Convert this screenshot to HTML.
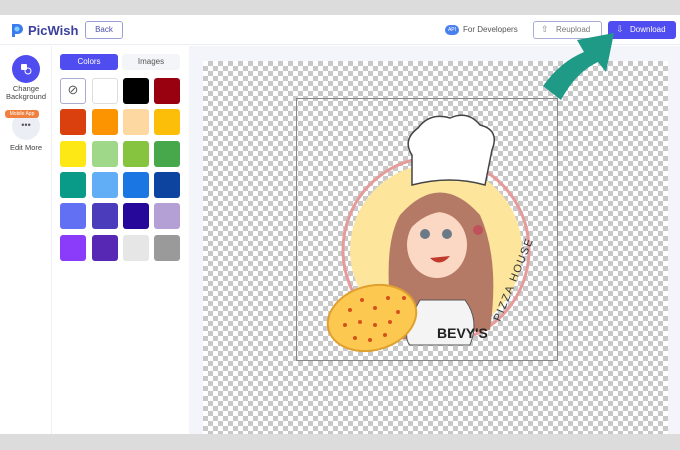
<!DOCTYPE html>
<html><head><meta charset="utf-8"><style>
*{margin:0;padding:0;box-sizing:border-box}
body{width:680px;height:450px;overflow:hidden;background:#fff;font-family:"Liberation Sans",sans-serif;position:relative}
.abs{position:absolute}
.top{left:0;top:0;width:680px;height:15px;background:#dcdcdc}
.bot{left:0;top:434px;width:680px;height:16px;background:#dcdcdc}
.hdr{left:0;top:15px;width:680px;height:30px;background:#fff;border-bottom:1px solid #eceef3}
.sw{position:absolute;width:26px;height:26px;border-radius:3px}
.checker{left:203px;top:61px;width:465px;height:373px;background-color:#fff;
background-image:linear-gradient(45deg,#c8c8c8 25%,transparent 25%,transparent 75%,#c8c8c8 75%),linear-gradient(45deg,#c8c8c8 25%,transparent 25%,transparent 75%,#c8c8c8 75%);
background-size:10px 10px;background-position:0 0,5px 5px}
</style></head><body>
<div class="abs top"></div>
<div class="abs hdr"></div>
<svg class="abs" style="left:9px;top:22px" width="16" height="16" viewBox="0 0 16 16"><path d="M3 2h6a5 5 0 0 1 0 10H6v3H3z" fill="#3a7bf0"/><circle cx="8" cy="7" r="2.5" fill="#7fd0ff"/></svg>
<div class="abs" style="left:28px;top:23px;font-size:13px;font-weight:bold;color:#3b3f9e">PicWish</div>
<div class="abs" style="left:85px;top:21px;width:38px;height:18px;border:1.5px solid #9aa0d8;border-radius:3px;font-size:8px;color:#4a50a8;text-align:center;line-height:15px">Back</div>
<div class="abs" style="left:445px;top:25px;width:14px;height:10px;background:#4a7ff0;border-radius:5px;font-size:5px;color:#fff;text-align:center;line-height:10px">API</div>
<div class="abs" style="left:463px;top:25px;font-size:8px;color:#555">For Developers</div>
<div class="abs" style="left:533px;top:21px;width:69px;height:18px;border:1.5px solid #a9acd8;border-radius:3px;font-size:8px;color:#777;line-height:15px;padding-left:22px">Reupload</div>
<div class="abs" style="left:541px;top:24px;font-size:9px;color:#888">⇧</div>
<div class="abs" style="left:608px;top:21px;width:68px;height:18px;background:#4f4cf0;border-radius:3px;font-size:8px;color:#fff;line-height:18px;padding-left:22px">Download</div>
<div class="abs" style="left:616px;top:24px;font-size:9px;color:#dde">⇩</div>
<div class="abs" style="left:0;top:46px;width:52px;height:388px;background:#fff;border-right:1px solid #eef0f4"></div>
<div class="abs" style="left:12px;top:55px;width:28px;height:28px;border-radius:50%;background:#4f4cf0"></div>
<svg class="abs" style="left:18px;top:61px" width="16" height="16"><rect x="3" y="3" width="6" height="6" rx="1" fill="#fff"/><circle cx="10" cy="10" r="3" fill="none" stroke="#fff"/></svg>
<div class="abs" style="left:0;top:85px;width:52px;text-align:center;font-size:7.5px;color:#444;line-height:8px">Change<br>Background</div>
<div class="abs" style="left:12px;top:112px;width:28px;height:28px;border-radius:50%;background:#eceef5;text-align:center;font-size:9px;color:#555;line-height:26px">•••</div>
<div class="abs" style="left:5px;top:110px;width:34px;height:8px;background:#f08040;border-radius:3px;font-size:5px;color:#fff;text-align:center;line-height:8px">Mobile App</div>
<div class="abs" style="left:0;top:143px;width:52px;text-align:center;font-size:7.5px;color:#444">Edit More</div>
<div class="abs" style="left:52px;top:46px;width:137px;height:388px;background:#fff"></div>
<div class="abs" style="left:60px;top:54px;width:58px;height:16px;background:#4f4cf0;border-radius:3px;font-size:8px;color:#fff;text-align:center;line-height:16px">Colors</div>
<div class="abs" style="left:122px;top:54px;width:58px;height:16px;background:#f4f5f8;border-radius:3px;font-size:8px;color:#555;text-align:center;line-height:16px">Images</div>
<div class="sw" style="left:60px;top:78px;border:1.5px solid #a9acd0;background:#fff;text-align:center;line-height:22px;font-size:13px;color:#555">⊘</div>
<div class="sw" style="left:92px;top:78px;border:1px solid #ddd;background:#fff"></div>
<div class="sw" style="left:123px;top:78px;background:#000"></div>
<div class="sw" style="left:154px;top:78px;background:#990010"></div>
<div class="sw" style="left:60px;top:109px;background:#d9400e"></div>
<div class="sw" style="left:92px;top:109px;background:#fb9400"></div>
<div class="sw" style="left:123px;top:109px;background:#fdd8a0"></div>
<div class="sw" style="left:154px;top:109px;background:#fdbe0a"></div>
<div class="sw" style="left:60px;top:141px;background:#fde816"></div>
<div class="sw" style="left:92px;top:141px;background:#a0d88a"></div>
<div class="sw" style="left:123px;top:141px;background:#86c440"></div>
<div class="sw" style="left:154px;top:141px;background:#46a84a"></div>
<div class="sw" style="left:60px;top:172px;background:#0a9a88"></div>
<div class="sw" style="left:92px;top:172px;background:#62aef6"></div>
<div class="sw" style="left:123px;top:172px;background:#1a76e2"></div>
<div class="sw" style="left:154px;top:172px;background:#0c44a0"></div>
<div class="sw" style="left:60px;top:203px;background:#6270f4"></div>
<div class="sw" style="left:92px;top:203px;background:#4a3cba"></div>
<div class="sw" style="left:123px;top:203px;background:#26089a"></div>
<div class="sw" style="left:154px;top:203px;background:#b4a0d4"></div>
<div class="sw" style="left:60px;top:235px;background:#8a3cfa"></div>
<div class="sw" style="left:92px;top:235px;background:#5628b4"></div>
<div class="sw" style="left:123px;top:235px;background:#e6e6e6"></div>
<div class="sw" style="left:154px;top:235px;background:#9a9a9a"></div>
<div class="abs" style="left:189px;top:46px;width:491px;height:388px;background:#f3f5fa"></div>
<div class="abs checker"></div>
<div class="abs" style="left:296px;top:98px;width:262px;height:263px;border:1px solid #888"></div>
<svg class="abs" style="left:0;top:0" width="680" height="450">
<circle cx="436" cy="250" r="93" fill="none" stroke="#e79a9a" stroke-width="3"/>
<circle cx="436" cy="250" r="86" fill="#fde59c"/>
<path d="M395 340 Q380 250 400 215 Q440 170 480 215 Q500 260 490 330 Z" fill="#b57a66"/>
<path d="M420 300 Q400 335 410 345 L470 345 Q480 320 465 300 Z" fill="#f4f4f4" stroke="#555"/>
<ellipse cx="437" cy="245" rx="30" ry="33" fill="#fbd8c4"/>
<path d="M405 235 Q415 195 445 200 Q475 205 478 240 Q460 215 440 212 Q420 215 405 235Z" fill="#b57a66"/>
<circle cx="425" cy="234" r="5" fill="#6c7a88"/><circle cx="447" cy="234" r="5" fill="#6c7a88"/>
<path d="M430 258 Q440 268 450 256 Z" fill="#c0392b"/>
<circle cx="478" cy="230" r="5" fill="#c0505a"/>
<path d="M412 185 L412 155 Q402 140 418 128 Q430 112 450 118 Q468 110 480 125 Q500 130 492 150 L485 185 Q450 175 412 185Z" fill="#fff" stroke="#444" stroke-width="1.5"/>
<ellipse cx="372" cy="318" rx="45" ry="32" transform="rotate(-15 372 318)" fill="#fcc850" stroke="#e0a030" stroke-width="2"/>
<g fill="#d6501a"><circle cx="350" cy="310" r="2"/><circle cx="362" cy="300" r="2"/><circle cx="375" cy="308" r="2"/><circle cx="388" cy="298" r="2"/><circle cx="398" cy="312" r="2"/><circle cx="345" cy="325" r="2"/><circle cx="360" cy="322" r="2"/><circle cx="375" cy="325" r="2"/><circle cx="390" cy="322" r="2"/><circle cx="355" cy="338" r="2"/><circle cx="370" cy="340" r="2"/><circle cx="385" cy="335" r="2"/><circle cx="404" cy="298" r="2"/></g>
<text x="437" y="338" font-family="Liberation Sans" font-weight="bold" font-size="14" fill="#222">BEVY'S</text>
<text x="0" y="0" font-family="Liberation Sans" font-size="11" fill="#333" letter-spacing="1.5" transform="translate(500 322) rotate(-68)">PIZZA HOUSE</text>
<path d="M543 86 Q560 62 584 52 L577 40 L614 33 L606 72 L598 62 Q576 72 561 100 Z" fill="#1f9a86"/>
</svg>
<div class="abs bot"></div>
</body></html>
